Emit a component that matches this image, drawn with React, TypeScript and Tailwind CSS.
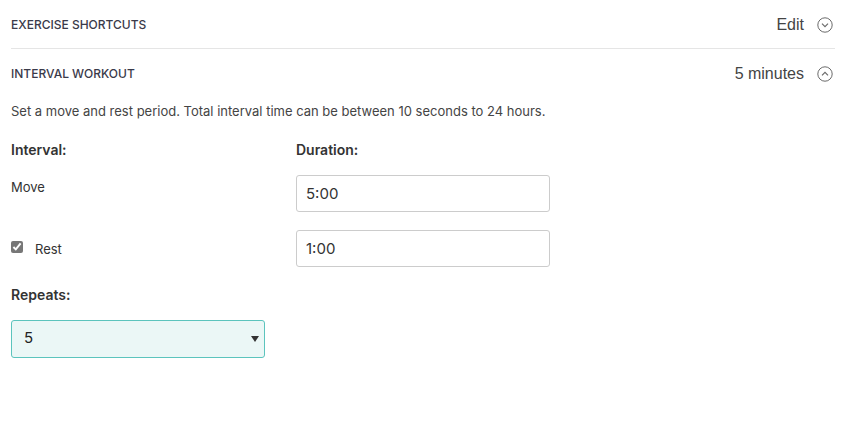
import React from 'react';

function CircleChevron({ up }: { up?: boolean }) {
  return (
    <svg className="h-[16px] w-[16px] text-[#6b6b6b]" viewBox="0 0 16 16" fill="none" stroke="currentColor" strokeWidth="1">
      <circle cx="8" cy="8" r="7.2" />
      <path d={up ? 'M5 9.3 8 6.3l3 3' : 'M5 6.7l3 3 3-3'} strokeWidth="1.2" />
    </svg>
  );
}

export default function App() {
  return (
    <div className="min-h-screen bg-white text-[#333] font-['Inter','Lato',sans-serif]">
      <div className="w-[824px] ml-[11px]">
        {/* Exercise shortcuts */}
        <div className="flex h-[49px] items-center justify-between border-b border-[#e5e5e5] pt-[1px]">
          <span className="text-[12px] font-medium text-[#3a3a4a]">EXERCISE SHORTCUTS</span>
          <div className="flex items-center gap-[13px] pr-[2px]">
            <span className="font-['Liberation_Sans',Arial,sans-serif] text-[16px] text-[#444]">Edit</span>
            <CircleChevron />
          </div>
        </div>

        {/* Interval workout */}
        <div className="flex h-[50px] items-center justify-between">
          <span className="text-[12px] font-medium text-[#3a3a4a]">INTERVAL WORKOUT</span>
          <div className="flex items-center gap-[13px] pr-[2px]">
            <span className="font-['Liberation_Sans',Arial,sans-serif] text-[16px] text-[#444]">5 minutes</span>
            <CircleChevron up />
          </div>
        </div>

        <p className="mt-[3px] text-[13px] text-[#444]">
          Set a move and rest period. Total interval time can be between 10 seconds to 24 hours.
        </p>

        <div className="mt-[17px] grid grid-cols-[285px_254px]">
          <div className="text-[14px] font-semibold text-[#333]">Interval:</div>
          <div className="text-[14px] font-semibold text-[#333]">Duration:</div>

          <div className="pt-[18px] text-[13px] text-[#333]">Move</div>
          <div className="pt-[15px]">
            <input
              readOnly
              value="5:00"
              className="h-[37px] w-full rounded-[3px] border border-[#cccccc] px-[9px] text-[15px] text-[#333] outline-none"
            />
          </div>

          <div className="flex items-center pt-[18px] text-[13px] text-[#333]">
            <input type="checkbox" checked readOnly className="h-[12px] w-[12px] m-0 mb-[3px] accent-[#777]" />
            <span className="ml-[12px] mt-[3px]">Rest</span>
          </div>
          <div className="pt-[18px]">
            <input
              readOnly
              value="1:00"
              className="h-[37px] w-full rounded-[3px] border border-[#cccccc] px-[9px] text-[15px] text-[#333] outline-none"
            />
          </div>
        </div>

        <div className="mt-[17px] text-[14px] font-semibold text-[#333]">Repeats:</div>

        <div className="mt-[15px] flex h-[38px] w-[254px] items-center justify-between rounded-[3px] border border-[#5cc4bd] bg-[#ebf7f6] pl-[12px] pr-[5px]">
          <span className="text-[15px] text-[#222]">5</span>
          <svg className="h-[6px] w-[8px]" viewBox="0 0 8 6">
            <path d="M0 0h8L4 6z" fill="#333" />
          </svg>
        </div>
      </div>
    </div>
  );
}
